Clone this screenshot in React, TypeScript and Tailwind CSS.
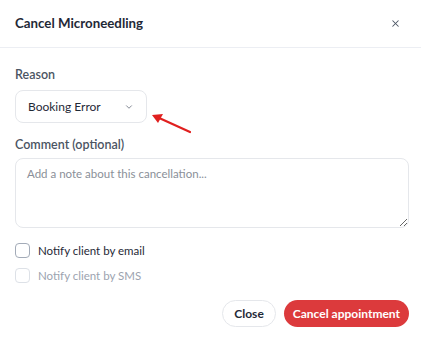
import React from 'react';
import { X, ChevronDown } from 'lucide-react';

const font = { fontFamily: 'Lato, "Noto Sans", sans-serif' };

const App = () => {
  return (
    <div className="w-[421px] h-[344px] bg-white overflow-hidden" style={font}>
      <div className="flex items-center justify-between h-[48px] pl-[15px] pr-[20px] border-b border-[#eceef3]">
        <h2 className="text-[13.3px] font-bold text-[#1f2937]">Cancel Microneedling</h2>
        <X className="w-[11px] h-[11px] text-[#4b5563]" strokeWidth={2.2} />
      </div>

      <div className="pl-[15px] pr-[12px] pt-[19px]">
        <label className="block leading-[16px] text-[12.5px] font-semibold text-[#4b5563] mb-[7px]">Reason</label>
        <div className="relative">
          <button className="flex items-center justify-between w-[132px] h-[33px] pl-[12px] pr-[12px] border border-[#e5e7eb] rounded-[8px] text-[12px] text-[#1f2937]">
            <span>Booking Error</span>
            <ChevronDown className="w-[10px] h-[10px] text-[#6b7280]" strokeWidth={2} />
          </button>
          <svg className="absolute left-[132px] top-[17px]" width="48" height="28" viewBox="0 0 48 28">
            <line x1="43" y1="25" x2="10" y2="10" stroke="#e0201f" strokeWidth="2.2" strokeLinecap="round" />
            <path d="M5 8 L16 7 L11 16 Z" fill="#e0201f" />
          </svg>
        </div>

        <label className="block leading-[16px] text-[12.5px] font-semibold text-[#4b5563] mt-[14px] mb-[5px]">Comment (optional)</label>
        <textarea
          className="block w-full h-[70px] px-[11px] py-[6px] border border-[#e5e7eb] rounded-[8px] text-[11.5px] text-[#1f2937] placeholder:text-[#8a8f98] outline-none"
          placeholder="Add a note about this cancellation..."
        />

        <div className="flex flex-col gap-[10px] mt-[15px]">
          <label className="flex items-center gap-[8px] leading-[15px] text-[11.5px] text-[#1f2937]">
            <span className="w-[15px] h-[15px] rounded-[4px] border border-[#a3abb8]" />
            Notify client by email
          </label>
          <label className="flex items-center gap-[8px] leading-[15px] text-[11.5px] text-[#9ca3af]">
            <span className="w-[15px] h-[15px] rounded-[4px] border border-[#dde1e7]" />
            Notify client by SMS
          </label>
        </div>

        <div className="flex justify-end gap-[8px] mt-[17px]">
          <button className="h-[27px] px-[11px] rounded-full border border-[#e5e7eb] text-[12px] font-bold text-[#1f2937]">Close</button>
          <button className="h-[27px] px-[9px] rounded-full bg-[#dc3a3c] text-[12px] font-bold text-white">Cancel appointment</button>
        </div>
      </div>
    </div>
  );
};

export default App;
